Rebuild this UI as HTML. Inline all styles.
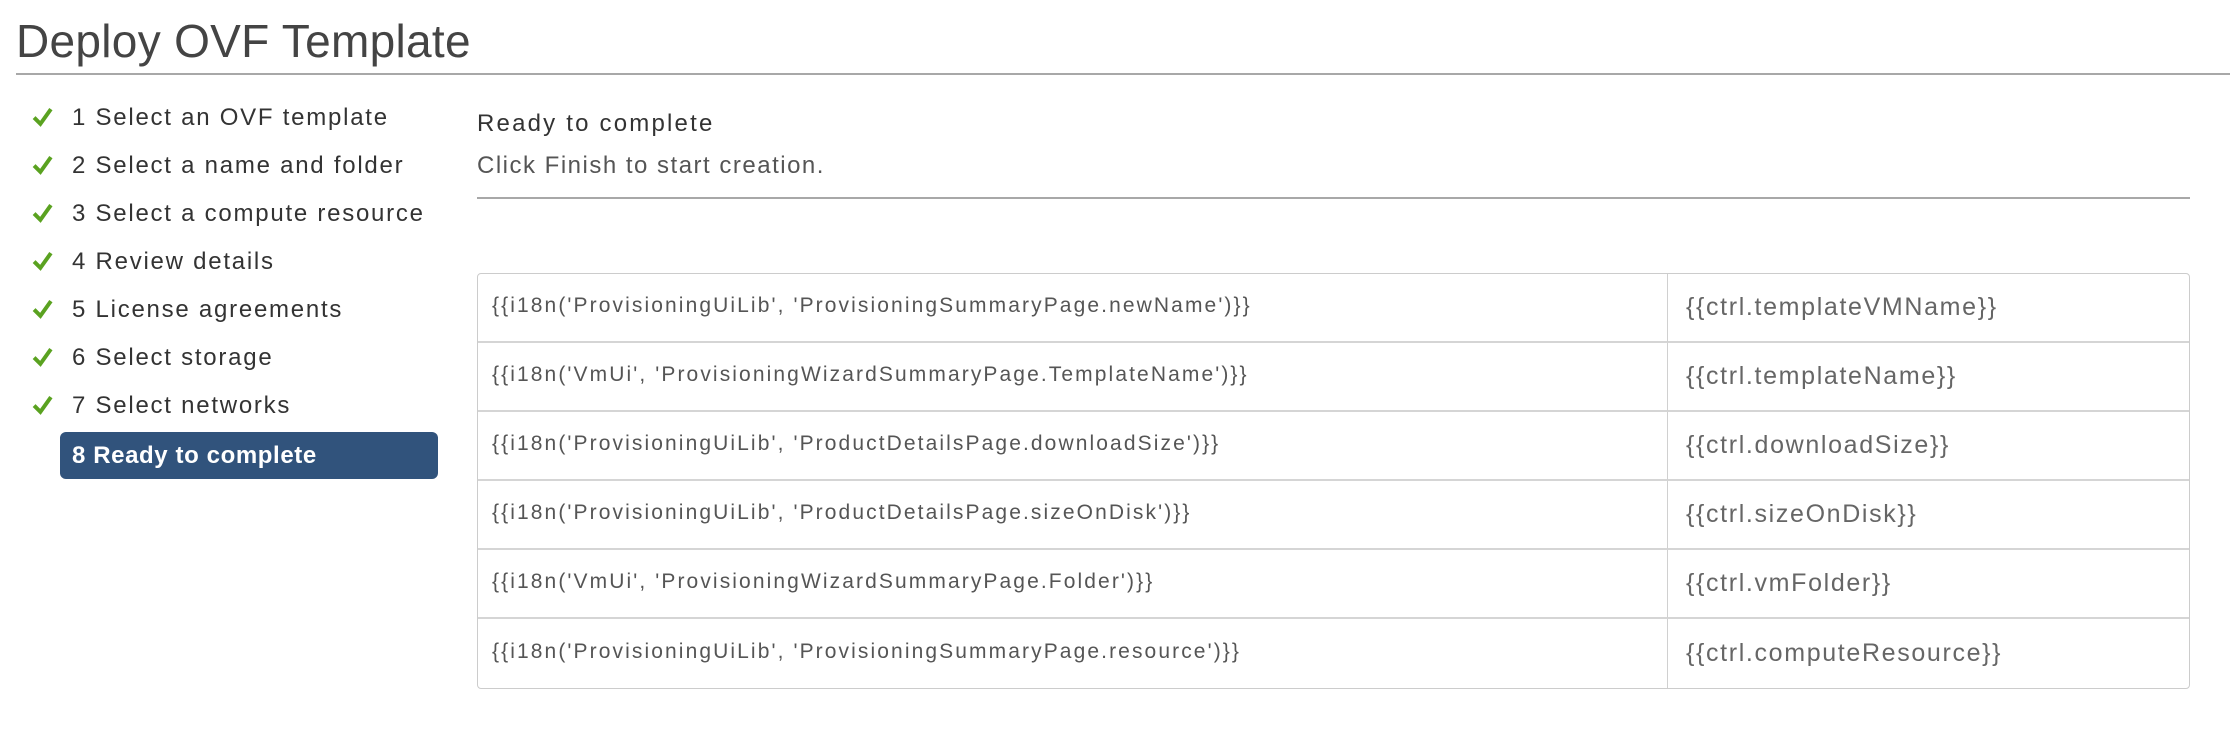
<!DOCTYPE html>
<html><head><meta charset="utf-8"><style>
body{margin:0;width:2230px;height:734px;background:#fff;font-family:"Liberation Sans",sans-serif;position:relative;overflow:hidden;color:#333}
.t{position:absolute;white-space:nowrap}
#title{left:16px;top:14px;font-size:46px;color:#444;letter-spacing:0.3px}
#hl{position:absolute;left:16px;top:73px;width:2214px;height:2px;background:#a8a8a8}
.step{position:absolute;left:72px;font-size:24px;color:#333;white-space:nowrap;letter-spacing:1.75px}
.ck{position:absolute;left:32px;width:21px;height:21px}
#active{position:absolute;left:60px;top:432px;width:378px;height:47px;background:#31537c;border-radius:6px}
#active span{position:absolute;left:12px;top:10px;font-size:24px;font-weight:bold;color:#fff;letter-spacing:0.6px}
#rl{position:absolute;left:477px;top:197px;width:1713px;height:2px;background:#a8a8a8}
table{position:absolute;left:477px;top:273px;width:1713px;border-collapse:separate;border-spacing:0;border:1px solid #ccc;border-radius:4px}
td{height:69px;border-bottom:2px solid #d5d5d5;padding:0 0 4px 14px;vertical-align:middle;box-sizing:border-box;white-space:nowrap}
tr:last-child td{border-bottom:none}
td.l{width:1190px;border-right:1px solid #d0d0d0;font-size:21px;color:#555;letter-spacing:2.1px}
td.r{font-size:25px;color:#666;padding-top:4px;padding-left:18px;letter-spacing:1.65px}
</style></head><body>
<div id="title" class="t">Deploy OVF Template</div>
<div id="hl"></div>

<svg class="ck" style="top:106px" viewBox="0 0 20 20"><path d="M2 11 L8 17 L18 3" fill="none" stroke="#5aa220" stroke-width="3.8"/></svg>
<div class="step" style="top:104px">1 Select an OVF template</div>
<svg class="ck" style="top:154px" viewBox="0 0 20 20"><path d="M2 11 L8 17 L18 3" fill="none" stroke="#5aa220" stroke-width="3.8"/></svg>
<div class="step" style="top:152px">2 Select a name and folder</div>
<svg class="ck" style="top:202px" viewBox="0 0 20 20"><path d="M2 11 L8 17 L18 3" fill="none" stroke="#5aa220" stroke-width="3.8"/></svg>
<div class="step" style="top:200px">3 Select a compute resource</div>
<svg class="ck" style="top:250px" viewBox="0 0 20 20"><path d="M2 11 L8 17 L18 3" fill="none" stroke="#5aa220" stroke-width="3.8"/></svg>
<div class="step" style="top:248px">4 Review details</div>
<svg class="ck" style="top:298px" viewBox="0 0 20 20"><path d="M2 11 L8 17 L18 3" fill="none" stroke="#5aa220" stroke-width="3.8"/></svg>
<div class="step" style="top:296px">5 License agreements</div>
<svg class="ck" style="top:346px" viewBox="0 0 20 20"><path d="M2 11 L8 17 L18 3" fill="none" stroke="#5aa220" stroke-width="3.8"/></svg>
<div class="step" style="top:344px">6 Select storage</div>
<svg class="ck" style="top:394px" viewBox="0 0 20 20"><path d="M2 11 L8 17 L18 3" fill="none" stroke="#5aa220" stroke-width="3.8"/></svg>
<div class="step" style="top:392px">7 Select networks</div>
<div id="active"><span>8 Ready to complete</span></div>

<div class="t" style="left:477px;top:110px;font-size:24px;color:#333;letter-spacing:2.2px">Ready to complete</div>
<div class="t" style="left:477px;top:152px;font-size:24px;color:#555;letter-spacing:1.5px">Click Finish to start creation.</div>
<div id="rl"></div>

<table>
<tr><td class="l">{{i18n('ProvisioningUiLib', 'ProvisioningSummaryPage.newName')}}</td><td class="r">{{ctrl.templateVMName}}</td></tr>
<tr><td class="l">{{i18n('VmUi', 'ProvisioningWizardSummaryPage.TemplateName')}}</td><td class="r">{{ctrl.templateName}}</td></tr>
<tr><td class="l">{{i18n('ProvisioningUiLib', 'ProductDetailsPage.downloadSize')}}</td><td class="r">{{ctrl.downloadSize}}</td></tr>
<tr><td class="l">{{i18n('ProvisioningUiLib', 'ProductDetailsPage.sizeOnDisk')}}</td><td class="r">{{ctrl.sizeOnDisk}}</td></tr>
<tr><td class="l">{{i18n('VmUi', 'ProvisioningWizardSummaryPage.Folder')}}</td><td class="r">{{ctrl.vmFolder}}</td></tr>
<tr><td class="l">{{i18n('ProvisioningUiLib', 'ProvisioningSummaryPage.resource')}}</td><td class="r">{{ctrl.computeResource}}</td></tr>
</table>
</body></html>
